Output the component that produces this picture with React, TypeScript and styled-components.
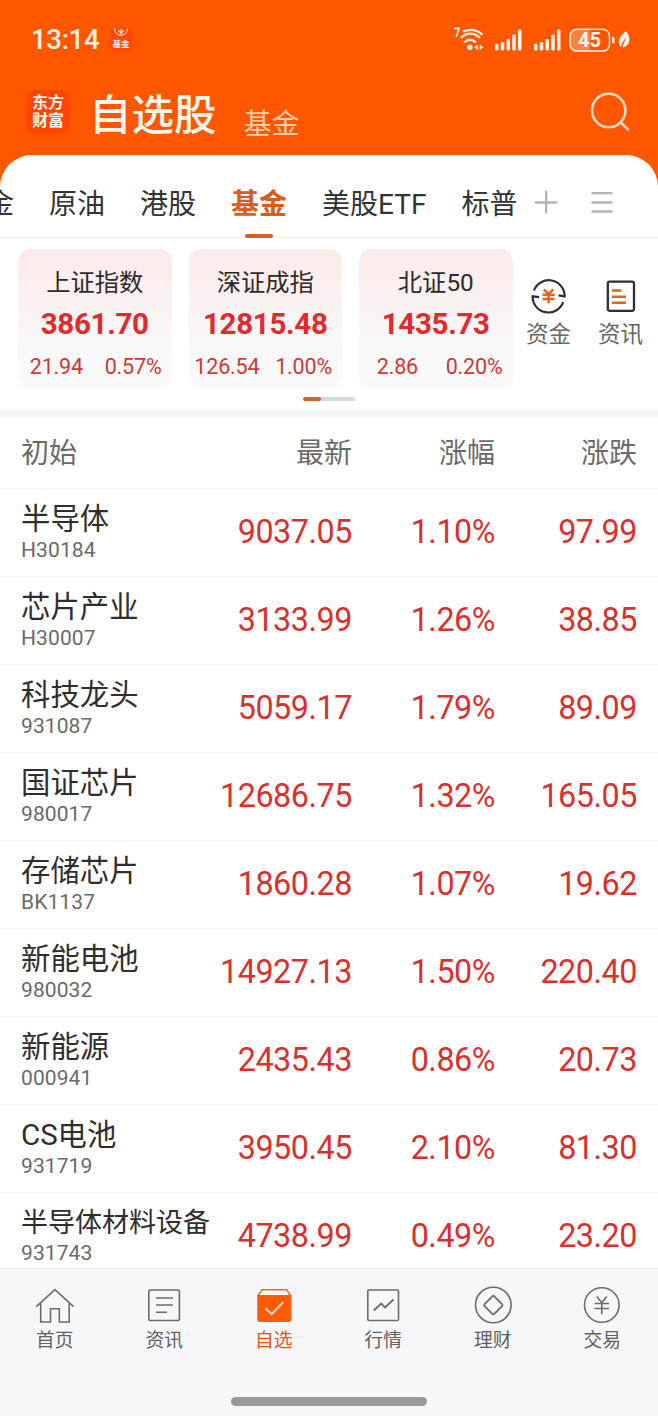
import React from "react";
import styled, { createGlobalStyle } from "styled-components";

const BRAND = "#ff5700";
const RED = "#d92f2f";
const CREAM = "#fff1e4";

const GlobalStyle = createGlobalStyle`
  * { box-sizing: border-box; }
  html, body { margin: 0; padding: 0; }
  body {
    font-family: Roboto, "Noto Sans CJK SC", sans-serif;
    color: #2e2e2e;
    background: #fff;
  }
`;

const Screen = styled.div`
  width: 658px;
  height: 1416px;
  display: flex;
  flex-direction: column;
  overflow: hidden;
  background: ${BRAND};
`;

const StatusBar = styled.div`
  height: 78px;
  flex: none;
  display: flex;
  align-items: center;
  padding: 2px 28px 0 31px;
`;

const Clock = styled.span`
  font-size: 27.5px;
  line-height: 30px;
  font-weight: 500;
  letter-spacing: -0.3px;
  color: ${CREAM};
  width: 78px;
`;

const FundBadge = styled.div`
  width: 24px;
  height: 24px;
  border-radius: 6px;
  background: #ff4a08;
  color: ${CREAM};
  display: flex;
  flex-direction: column;
  align-items: center;
  font-size: 8.5px;
  line-height: 11px;
  font-weight: 700;
`;

const StatusIcons = styled.div`
  margin-left: auto;
  display: flex;
  align-items: center;
  svg { display: block; }
`;

const Spacer = styled.span<{ $w: number }>`
  width: ${(p) => p.$w}px;
`;

const TitleBar = styled.header`
  height: 77px;
  flex: none;
  display: flex;
  align-items: flex-start;
  padding: 12px 27px 0 26px;
`;

const Logo = styled.div`
  width: 44px;
  height: 44px;
  border-radius: 9px;
  background: #ff4504;
  color: #fff3ea;
  font-size: 16px;
  line-height: 18px;
  font-weight: 700;
  text-align: center;
  padding-top: 4px;
`;

const Title = styled.h1`
  margin: 5px 0 0 19px;
  font-size: 42.5px;
  line-height: 42px;
  font-weight: 500;
  color: #fff6ec;
`;

const SubTitle = styled.span`
  margin: 19px 0 0 27px;
  font-size: 28px;
  line-height: 32px;
  color: #ffcfa9;
`;

const SearchSlot = styled.div`
  margin: 1px -1px 0 auto;
  svg { display: block; }
`;

const Sheet = styled.main`
  flex: 1;
  min-height: 0;
  display: flex;
  flex-direction: column;
  background: #fff;
  border-radius: 32px 32px 0 0;
  overflow: hidden;
`;

const TabBar = styled.nav`
  height: 83px;
  flex: none;
  display: flex;
  box-shadow: inset 0 -1.5px 0 #f3f3f4;
`;

const TabScroller = styled.div`
  width: 519px;
  display: flex;
  gap: 35px;
  overflow: hidden;
`;

const Tab = styled.div<{ $active?: boolean; $cut?: boolean }>`
  flex: none;
  display: flex;
  flex-direction: column;
  align-items: center;
  justify-content: space-between;
  margin-left: ${(p) => (p.$cut ? "-14px" : "0")};
  padding-top: 33px;
  height: 83px;
  font-size: 28px;
  line-height: 34px;
  white-space: nowrap;
  font-weight: ${(p) => (p.$active ? 700 : 400)};
  color: ${(p) => (p.$active ? "#dd5a17" : "#333")};
`;

const TabMark = styled.i`
  width: 28px;
  height: 4px;
  border-radius: 2px;
  background: #d2622a;
`;

const TabTools = styled.div`
  padding: 35px 0 0 15px;
  display: flex;
  gap: 33px;
  svg { display: block; }
`;

const Indices = styled.section`
  height: 171px;
  flex: none;
  display: flex;
  padding: 11px 0 0 18px;
`;

const CardsColumn = styled.div`
  display: flex;
  gap: 17px;
`;

const Card = styled.article`
  width: 153.5px;
  height: 139px;
  border-radius: 12px;
  background: linear-gradient(180deg, #fdeaea 0%, #f9f4f5 50%, #f9f9fa 75%, #f9f9fa 100%);
  display: flex;
  flex-direction: column;
  align-items: center;
`;

const CardName = styled.div`
  margin-top: 19px;
  font-size: 24.3px;
  line-height: 30px;
  color: #2b2b2b;
`;

const CardValue = styled.div`
  margin-top: 11px;
  font-size: 29.5px;
  line-height: 30px;
  font-weight: 700;
  letter-spacing: -0.3px;
  color: #de2b2b;
`;

const CardDelta = styled.div`
  align-self: stretch;
  margin-top: 15px;
  display: grid;
  grid-template-columns: 1fr 1fr;
  font-size: 21.5px;
  line-height: 26px;
  color: #d23636;
  span { display: flex; justify-content: center; letter-spacing: -0.15px; }
`;

const Shortcuts = styled.div`
  display: flex;
  padding: 29px 0 0 13px;
  gap: 26px;
`;

const Shortcut = styled.div`
  width: 46px;
  display: flex;
  flex-direction: column;
  align-items: center;
  font-size: 22.5px;
  line-height: 28px;
  white-space: nowrap;
  color: #666;
  svg { display: block; margin-bottom: 6px; }
`;

const Pager = styled.div`
  height: 4px;
  width: 52px;
  margin: -12px 0 8px 303px;
  flex: none;
  border-radius: 2px;
  background: #d8d8dc;
  overflow: hidden;
`;

const PagerFill = styled.div`
  width: 18px;
  height: 4px;
  border-radius: 2px;
  background: #d2622a;
`;

const Band = styled.div`
  height: 9px;
  flex: none;
  background: #f6f7f9;
`;

const Table = styled.section`
  flex: 1;
  min-height: 0;
  overflow: hidden;
`;

const Row = styled.div<{ $head?: boolean }>`
  height: ${(p) => (p.$head ? 71 : 88)}px;
  display: grid;
  grid-template-columns: 196px 135px 143px 142px;
  padding: 0 21px 0 21px;
  align-items: center;
  border-bottom: 1px solid #f3f3f4;
  font-size: 28px;
  color: #6a6a6a;
`;

const HeadCell = styled.div<{ $right?: boolean }>`
  text-align: ${(p) => (p.$right ? "right" : "left")};
  line-height: 34px;
  padding-top: 2px;
`;

const NameCell = styled.div`
  white-space: nowrap;
  padding-bottom: 2px;
`;

const Name = styled.div<{ $long?: boolean }>`
  font-size: ${(p) => (p.$long ? 27 : 29.4)}px;
  line-height: 36px;
  color: #2e2e2e;
`;

const Code = styled.div<{ $tight?: boolean }>`
  font-size: 21px;
  line-height: 26px;
  margin-top: ${(p) => (p.$tight ? -1 : 0)}px;
  letter-spacing: 0.1px;
  color: #6a6a6a;
`;

const Num = styled.div`
  justify-self: end;
  font-size: 32.3px;
  line-height: 40px;
  padding-bottom: 2px;
  letter-spacing: -0.45px;
  color: ${RED};
  white-space: nowrap;
`;

const BottomBar = styled.footer`
  height: 148px;
  flex: none;
  background: #f7f7fa;
  border-top: 1px solid #ececee;
  display: flex;
  flex-direction: column;
  align-items: center;
`;

const NavItems = styled.div`
  width: 100%;
  height: 128px;
  padding-right: 1px;
  display: grid;
  grid-template-columns: repeat(6, 1fr);
`;

const NavItem = styled.div<{ $active?: boolean }>`
  display: flex;
  flex-direction: column;
  align-items: center;
  padding-top: 16px;
  font-size: 18.8px;
  line-height: 24px;
  color: ${(p) => (p.$active ? "#dd5a17" : "#606060")};
  svg { display: block; margin-bottom: 4px; }
`;

const HomeIndicator = styled.div`
  width: 196px;
  height: 9px;
  border-radius: 5px;
  background: #999;
`;

const Wifi = () => (
  <svg width="31" height="28" viewBox="452 26 31 28" fill="none" stroke={CREAM} strokeWidth="2.3">
    <path d="M453 28.400h5l-2.800 8.600" strokeWidth="1.700" />
    <path d="M462 31.600q10.300-4.600 19.500 3" />
    <path d="M459.800 37.800q9.500-8.300 19.200 0" />
    <path d="M463.300 42.300q5.700-5 11.600 0" />
    <circle cx="468.800" cy="47.300" r="2.800" fill={CREAM} stroke="none" />
    <path d="M473.300 47.300l3.600-3v6zM482.200 47.300l-3.600-3v6z" fill={CREAM} stroke="none" />
  </svg>
);

const Signal = () => (
  <svg width="27" height="24" viewBox="0 0 27 24" fill={CREAM}>
    {[6.7, 8.5, 11.5, 16, 21].map((h, i) => (
      <rect key={i} x={i * 5.75} y={22.5 - h} width="3.5" height={h} rx="1.3" />
    ))}
  </svg>
);

const Battery = () => (
  <svg width="46" height="26" viewBox="568 27 46 26">
    <path d="M576 29.500h13v21.500h-13q-7 0-7-7v-7.500q0-7 7-7z" fill="#fff" fillOpacity=".26" />
    <rect x="569" y="29.300" width="39.500" height="21.800" rx="6.800" fill="none" stroke={CREAM} strokeWidth="1.500" />
    <rect x="611" y="36.700" width="2.400" height="6.800" rx="1.200" fill={CREAM} />
    <text x="588.500" y="47.400" textAnchor="middle" fontFamily="Roboto" fontWeight="700" fontSize="20" fill="#fff6ec">45</text>
  </svg>
);

const Leaf = () => (
  <svg width="12" height="20" viewBox="617 30 12 20">
    <path d="M625.300 31c2.300 3.300 4.200 8 2.300 12-1.300 2.700-3.800 4.400-6 4.600 1-4.500 2.300-7.600 4-10.500-3 3-4.600 6-5.500 9.800-4.500-4.400-2.300-10.300 5.200-15.900z" fill="#fff6ec" />
  </svg>
);

const SearchIcon = () => (
  <svg width="42" height="42" viewBox="590 91 42 42" fill="none" stroke="#ffdcc3" strokeWidth="2.600" strokeLinecap="round">
    <circle cx="608.700" cy="110.500" r="16.700" />
    <path d="M620.500 122.300l7.500 7.200" />
  </svg>
);

const FundMark = () => (
  <svg width="18" height="11" viewBox="0 0 18 11" fill="none" stroke={CREAM}>
    <path d="M2.500 0.500c.5 9 12.500 9 13 0" strokeWidth="1" />
    <path d="M6.300 2.200l2.700 3.300 2.700-3.300M9 1.200v4.300" strokeWidth="1.300" />
  </svg>
);

const PlusIcon = () => (
  <svg width="24" height="26" viewBox="534 190 24 26" stroke="#b4b4b4" strokeWidth="2.300" strokeLinecap="round">
    <path d="M535.700 202.500h21M546.200 191.700v21" />
  </svg>
);

const MenuIcon = () => (
  <svg width="22" height="26" viewBox="591 190 22 26" stroke="#b4b4b4" strokeWidth="2.300">
    <path d="M591.500 193.200h21M591.500 202.500h21M591.500 211.500h21" />
  </svg>
);

const MoneyIcon = () => (
  <svg width="36" height="36" viewBox="531 279 36 36" fill="none" stroke="#2f2f2f" strokeWidth="2.200">
    <path d="M534 291.500a15.800 15.800 0 0 1 30.600 5.900l-6-1" />
    <path d="M563.200 303.200a15.800 15.800 0 0 1-30.600-5.900l6.500.9" />
    <path d="M543.800 290.500l4.700 4.300 4.700-4.300M542.500 295.800h12.200M542.500 300h12.200M548.600 295v9.300" stroke="#f0601c" strokeWidth="2.400" />
  </svg>
);

const NewsIcon = () => (
  <svg width="36" height="36" viewBox="603 279 36 36" fill="none" stroke="#2f2f2f" strokeWidth="2.300">
    <rect x="607.800" y="282.700" width="26.200" height="29.100" rx="2" />
    <path d="M612 291.500h9.500M612 297.700h14M612 303.700h14" stroke="#e0622a" strokeWidth="2.500" />
  </svg>
);

const navStroke = { fill: "none", stroke: "#6c6c6c", strokeWidth: 1.6 };

const HomeIcon = () => (
  <svg width="40" height="40" viewBox="35 1285 40 40" {...navStroke}>
    <path d="M36.300 1306.700l18.700-17 18.500 17M40.700 1303v19h9.800v-13.300h8.800v13.300h9.900v-19" />
  </svg>
);

const ArticleIcon = () => (
  <svg width="40" height="40" viewBox="144 1285 40 40" {...navStroke}>
    <rect x="148.800" y="1290" width="30.600" height="30.500" rx="1.500" />
    <path d="M156 1298h17M156 1305h17M156 1312.200h11" />
  </svg>
);

const WatchIcon = () => (
  <svg width="40" height="40" viewBox="253.500 1285 40 40">
    <path d="M257.300 1296l4.200-6.300h24.600l4.200 6.300" fill="#fff3ea" stroke="#ee6a28" strokeWidth="1.500" />
    <path d="M256.700 1295h34.300v24q0 3-3 3h-28.300q-3 0-3-3z" fill="#ff5a05" />
    <path d="M265 1308.200l6.200 6 11.600-12" fill="none" stroke="#ffe6d4" strokeWidth="1.900" />
  </svg>
);

const ChartIcon = () => (
  <svg width="40" height="40" viewBox="363.500 1285 40 40" {...navStroke}>
    <rect x="368.300" y="1290" width="30.700" height="30.500" rx="1" />
    <path d="M374.300 1310.500l7.300-7 4 4 8.400-8" strokeWidth="1.900" />
  </svg>
);

const WealthIcon = () => (
  <svg width="40" height="40" viewBox="473 1285 40 40" {...navStroke}>
    <circle cx="493.300" cy="1305" r="17.800" />
    <path d="M492.300 1296.300q1-1 2 0l7.700 7.800q1 1 0 2l-7.700 7.700q-1 1-2 0l-7.700-7.700q-1-1 0-2z" strokeWidth="1.800" />
  </svg>
);

const TradeIcon = () => (
  <svg width="40" height="40" viewBox="582.500 1285 40 40" {...navStroke}>
    <circle cx="602.300" cy="1305" r="17.300" />
    <path d="M597.300 1296.500l5 6 5-6M595 1303.500h14.600M595 1308.500h14.600M602.300 1302.500v11.800" />
  </svg>
);

const tabs = ["金", "原油", "港股", "基金", "美股ETF", "标普"];

const indices = [
  { name: "上证指数", value: "3861.70", diff: "21.94", pct: "0.57%" },
  { name: "深证成指", value: "12815.48", diff: "126.54", pct: "1.00%" },
  { name: "北证50", value: "1435.73", diff: "2.86", pct: "0.20%" },
];

const rows = [
  ["半导体", "H30184", "9037.05", "1.10%", "97.99"],
  ["芯片产业", "H30007", "3133.99", "1.26%", "38.85"],
  ["科技龙头", "931087", "5059.17", "1.79%", "89.09"],
  ["国证芯片", "980017", "12686.75", "1.32%", "165.05"],
  ["存储芯片", "BK1137", "1860.28", "1.07%", "19.62"],
  ["新能电池", "980032", "14927.13", "1.50%", "220.40"],
  ["新能源", "000941", "2435.43", "0.86%", "20.73"],
  ["CS电池", "931719", "3950.45", "2.10%", "81.30"],
  ["半导体材料设备", "931743", "4738.99", "0.49%", "23.20"],
];

const navItems = [
  { label: "首页", Icon: HomeIcon },
  { label: "资讯", Icon: ArticleIcon },
  { label: "自选", Icon: WatchIcon, active: true },
  { label: "行情", Icon: ChartIcon },
  { label: "理财", Icon: WealthIcon },
  { label: "交易", Icon: TradeIcon },
];

export default function App() {
  return (
    <>
      <GlobalStyle />
      <Screen>
        <StatusBar>
          <Clock>13:14</Clock>
          <FundBadge>
            <FundMark />
            基金
          </FundBadge>
          <StatusIcons>
            <Wifi />
            <Spacer $w={11} />
            <Signal />
            <Spacer $w={12} />
            <Signal />
            <Spacer $w={8} />
            <Battery />
            <Spacer $w={3} />
            <Leaf />
          </StatusIcons>
        </StatusBar>
        <TitleBar>
          <Logo>
            东方
            <br />
            财富
          </Logo>
          <Title>自选股</Title>
          <SubTitle>基金</SubTitle>
          <SearchSlot>
            <SearchIcon />
          </SearchSlot>
        </TitleBar>
        <Sheet>
          <TabBar>
            <TabScroller>
              {tabs.map((t, i) => (
                <Tab key={t} $active={i === 3} $cut={i === 0}>
                  {t}
                  {i === 3 && <TabMark />}
                </Tab>
              ))}
            </TabScroller>
            <TabTools>
              <PlusIcon />
              <MenuIcon />
            </TabTools>
          </TabBar>
          <Indices>
            <CardsColumn>
              {indices.map((x) => (
                <Card key={x.name}>
                  <CardName>{x.name}</CardName>
                  <CardValue>{x.value}</CardValue>
                  <CardDelta>
                    <span>{x.diff}</span>
                    <span>{x.pct}</span>
                  </CardDelta>
                </Card>
              ))}
            </CardsColumn>
            <Shortcuts>
              <Shortcut>
                <MoneyIcon />
                资金
              </Shortcut>
              <Shortcut>
                <NewsIcon />
                资讯
              </Shortcut>
            </Shortcuts>
          </Indices>
          <Pager>
            <PagerFill />
          </Pager>
          <Band />
          <Table>
            <Row $head>
              <HeadCell>初始</HeadCell>
              <HeadCell $right>最新</HeadCell>
              <HeadCell $right>涨幅</HeadCell>
              <HeadCell $right>涨跌</HeadCell>
            </Row>
            {rows.map(([name, code, last, pct, diff]) => (
              <Row key={code}>
                <NameCell>
                  <Name $long={name.length > 6}>{name}</Name>
                  <Code $tight={name.length > 6}>{code}</Code>
                </NameCell>
                <Num>{last}</Num>
                <Num>{pct}</Num>
                <Num>{diff}</Num>
              </Row>
            ))}
          </Table>
        </Sheet>
        <BottomBar>
          <NavItems>
            {navItems.map(({ label, Icon, active }) => (
              <NavItem key={label} $active={active}>
                <Icon />
                {label}
              </NavItem>
            ))}
          </NavItems>
          <HomeIndicator />
        </BottomBar>
      </Screen>
    </>
  );
}
